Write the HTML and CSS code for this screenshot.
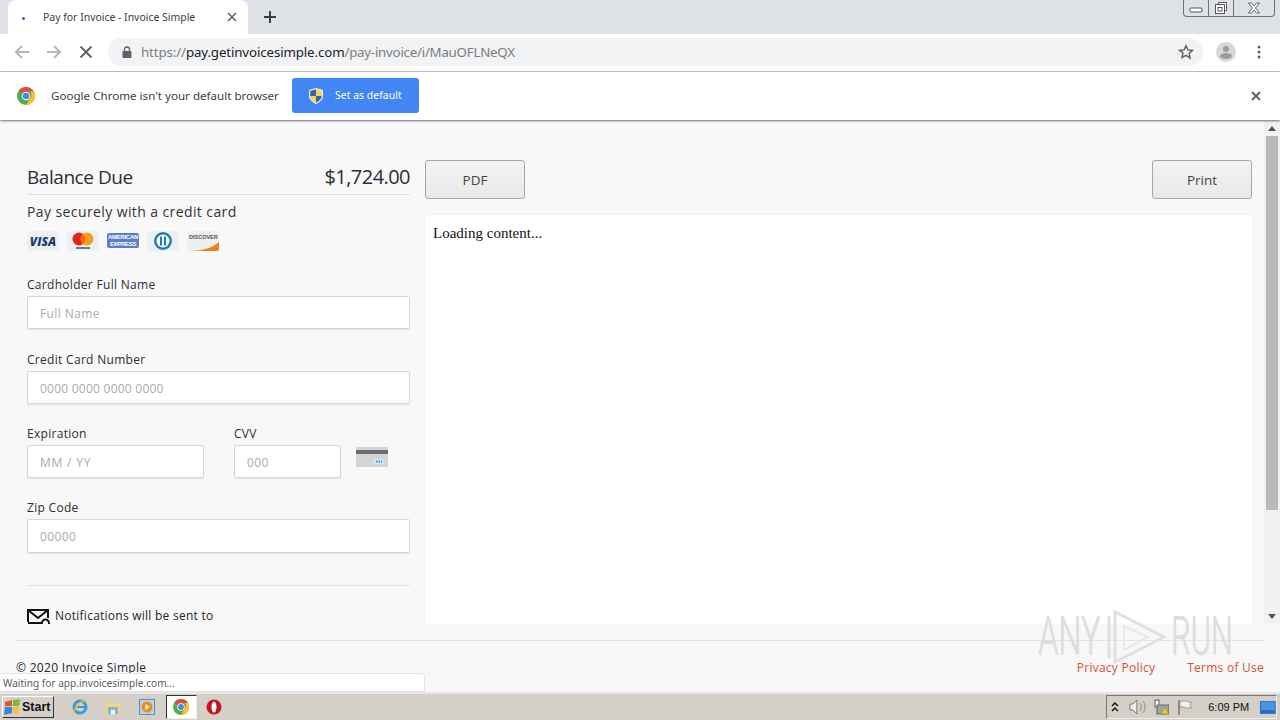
FILE: index.html
```html
<!DOCTYPE html>
<html lang="en">
<head>
<meta charset="utf-8">
<title>Pay for Invoice - Invoice Simple</title>
<link rel="stylesheet" href="styles.css">
</head>
<body>
<div class="browser">
  <header class="tabstrip">
    <div class="tab">
      <span class="tab-dot"></span>
      <span class="tab-title">Pay for Invoice - Invoice Simple</span>
      <svg class="tab-close" width="10" height="10" viewBox="0 0 10 10"><path d="M1 1l8 8M9 1l-8 8" stroke="#5f6368" stroke-width="1.6"/></svg>
    </div>
    <svg class="newtab" width="12" height="12" viewBox="0 0 12 12"><path d="M6 0v12M0 6h12" stroke="#3c4043" stroke-width="2"/></svg>
    <div class="caption">
      <span class="cap-btn cap-min"><svg width="14" height="6" viewBox="0 0 14 6"><rect x="1" y="1" width="12" height="4" rx="1" fill="#fff" stroke="#555"/></svg></span>
      <span class="cap-btn cap-max"><svg width="14" height="14" viewBox="0 0 14 14"><path d="M4.5 3.500V1.500h8v8h-2" fill="#fff" stroke="#555"/><rect x="1.500" y="3.500" width="9" height="9" fill="#fff" stroke="#555"/><rect x="4" y="6.500" width="4" height="3.500" fill="none" stroke="#555"/></svg></span>
      <span class="cap-btn cap-close"><svg width="14" height="12" viewBox="0 0 14 12"><path d="M1.500 1h3l2.500 3 2.500-3h3l-4 5 4 5h-3L7 8l-2.500 3h-3l4-5z" fill="#fff" stroke="#555" stroke-width=".9"/></svg></span>
    </div>
  </header>

  <nav class="toolbar">
    <svg class="nav-icon" width="16" height="16" viewBox="0 0 16 16"><path d="M15 8H2M8 2L2 8l6 6" fill="none" stroke="#b4b7ba" stroke-width="2"/></svg>
    <svg class="nav-icon" width="16" height="16" viewBox="0 0 16 16"><path d="M1 8h13M8 2l6 6-6 6" fill="none" stroke="#b4b7ba" stroke-width="2"/></svg>
    <svg class="nav-icon" width="14" height="14" viewBox="0 0 14 14"><path d="M1.500 1.500l11 11M12.500 1.500l-11 11" stroke="#5f6368" stroke-width="2"/></svg>
    <div class="omnibox">
      <svg class="lock" width="10" height="12" viewBox="0 0 10 12"><path d="M2.500 5V3.500a2.500 2.500 0 0 1 5 0V5" fill="none" stroke="#5f6368" stroke-width="1.300"/><rect x="0.500" y="5" width="9" height="7" rx="1" fill="#5f6368"/></svg>
      <span class="url"><span class="url-dim">https://</span><span class="url-host">pay.getinvoicesimple.com</span><span class="url-dim url-path">/pay-invoice/i/MauOFLNeQX</span></span>
      <svg class="star" width="16" height="16" viewBox="0 0 16 16"><path d="M8 1.800l1.900 4.100 4.500.5-3.300 3.100.9 4.500L8 11.300l-4 2.200.9-4.500L1.600 6.400l4.500-.5z" fill="none" stroke="#5f6368" stroke-width="1.500"/></svg>
    </div>
    <svg class="avatar" width="20" height="20" viewBox="0 0 20 20"><circle cx="10" cy="10" r="10" fill="#d7d8da"/><circle cx="10" cy="7" r="3" fill="#9a9ca0"/><ellipse cx="10" cy="14" rx="6" ry="3" fill="#9a9ca0"/></svg>
    <svg class="menu" width="4" height="14" viewBox="0 0 4 14"><circle cx="2" cy="2" r="1.500" fill="#5f6368"/><circle cx="2" cy="7" r="1.500" fill="#5f6368"/><circle cx="2" cy="12" r="1.500" fill="#5f6368"/></svg>
  </nav>

  <section class="infobar">
    <svg class="chrome-logo" width="18" height="18" viewBox="0 0 18 18"><circle cx="9" cy="9" r="9" fill="#4caf50"/><path d="M9 0a9 9 0 0 1 7.800 4.500H9A4.500 4.500 0 0 0 4.900 7.200L1.700 3.700A9 9 0 0 1 9 0z" fill="#e04a3f"/><path d="M16.800 4.500A9 9 0 0 1 9 18l3.900-6.700a4.500 4.500 0 0 0 0-6.800z" fill="#fbc02d"/><circle cx="9" cy="9" r="4.200" fill="#fff"/><circle cx="9" cy="9" r="3.300" fill="#4a86e8"/></svg>
    <span class="info-text">Google Chrome isn't your default browser</span>
    <button class="default-btn">
      <svg width="14" height="16" viewBox="0 0 14 16"><path d="M7 .5l6.500 1.800V8c0 3.700-2.800 6-6.500 7.500C3.300 14 .5 11.700.5 8V2.300z" fill="#f3d35a" stroke="#e8eefc"/><path d="M7 1.500V8H1.300V3zM7 8h5.700c-.2 3-2.600 5-5.700 6.400z" fill="#2f62b8"/></svg>
      <span class="default-label">Set as default</span>
    </button>
    <svg class="info-close" width="10" height="10" viewBox="0 0 10 10"><path d="M1 1l8 8M9 1l-8 8" stroke="#5f6368" stroke-width="2"/></svg>
  </section>

  <main class="page">
    <div class="frame">
      <aside class="pay">
        <div class="balance"><span class="bal-title">Balance Due</span><span class="amount">$1,724.00</span></div>
        <p class="secure">Pay securely with a credit card</p>
        <div class="cards">
          <span class="card visa">VISA</span>
          <span class="card"><svg width="24" height="20" viewBox="0 0 24 20"><circle cx="8" cy="8" r="6.500" fill="#e0231c"/><circle cx="16" cy="8" r="6.500" fill="#f49f1e"/><path d="M12 3.100a6.500 6.500 0 0 1 0 9.800 6.500 6.500 0 0 1 0-9.800z" fill="#f0641c"/><rect x="5" y="16" width="14" height="2" fill="#777"/></svg></span>
          <span class="card amex">AMERICAN<br>EXPRESS</span>
          <span class="card"><svg width="20" height="20" viewBox="0 0 20 20"><circle cx="10" cy="10" r="9" fill="#1b7fb8"/><circle cx="10" cy="10" r="6.500" fill="#fff"/><rect x="7" y="5.500" width="2" height="9" fill="#1b7fb8"/><rect x="11" y="5.500" width="2" height="9" fill="#1b7fb8"/></svg></span>
          <span class="card disc"><span class="disc-text">DISCOVER</span><svg class="disc-swoosh" width="32" height="10" viewBox="0 0 32 10"><path d="M2 10c12 0 24-3 30-9v9z" fill="#ef7f1a"/></svg></span>
        </div>

        <div class="field">
          <label class="label">Cardholder Full Name</label>
          <div class="input">Full Name</div>
        </div>
        <div class="field">
          <label class="label">Credit Card Number</label>
          <div class="input input-num">0000 0000 0000 0000</div>
        </div>
        <div class="field-row">
          <div class="field exp">
            <label class="label">Expiration</label>
            <div class="input input-exp">MM / YY</div>
          </div>
          <div class="field cvv">
            <label class="label">CVV</label>
            <div class="input">000</div>
          </div>
          <svg class="cvv-icon" width="32" height="20" viewBox="0 0 32 20"><rect width="32" height="20" fill="#d3d4d5"/><rect y="3" width="32" height="4" fill="#6b6d70"/><rect x="17" y="12" width="11" height="5" fill="#cfe9f7"/><path d="M20 14.500h6" stroke="#2d9bd8" stroke-width="2" stroke-dasharray="1.500 1"/></svg>
        </div>
        <div class="field zip">
          <label class="label">Zip Code</label>
          <div class="input">00000</div>
        </div>
        <hr class="rule">
        <div class="notify">
          <svg width="24" height="18" viewBox="0 0 24 18"><path d="M1 14V2h20v8M1 2l10 8 10-8M1 15h13" fill="none" stroke="#111" stroke-width="2"/><path d="M15 18v-3a3.500 3.500 0 0 1 7 0v3z" fill="none" stroke="#111" stroke-width="2"/></svg>
          <span>Notifications will be sent to</span>
        </div>
      </aside>

      <section class="viewer">
        <div class="viewer-actions">
          <button class="gray-btn">PDF</button>
          <button class="gray-btn">Print</button>
        </div>
        <div class="sheet">Loading content...</div>
      </section>

      <div class="scrollbar">
        <span class="arrow-up"></span>
        <span class="thumb"></span>
        <span class="arrow-down"></span>
      </div>
    </div>

    <footer class="footer">
      <span class="copy">© 2020 Invoice Simple</span>
      <span class="links"><a>Privacy Policy</a><a>Terms of Use</a></span>
    </footer>

    <div class="status">Waiting for app.invoicesimple.com...</div>
    <div class="watermark">
      <span class="wm-text">ANY</span>
      <svg width="62" height="56" viewBox="0 0 62 56"><path d="M3 8v42M9 4v50L58 29z" fill="none" stroke="#dfe0e1" stroke-width="3"/><path d="M18 18v24l24-13z" fill="none" stroke="#e8e9ea" stroke-width="2"/></svg>
      <span class="wm-text">RUN</span>
    </div>
  </main>

  <footer class="taskbar">
    <button class="start">
      <svg width="18" height="16" viewBox="0 0 18 16"><path d="M1 3l7-2v6H1z" fill="#e2562b"/><path d="M9 1l7-1-1 7H9z" fill="#7dba3c"/><path d="M1 8h7v6l-8 2z" fill="#3a86d8"/><path d="M9 8h6l-1 7-5-1z" fill="#f3c033"/></svg>
      <span>Start</span>
    </button>
    <span class="task-item"><svg width="18" height="18" viewBox="0 0 18 18"><circle cx="9" cy="9" r="6" fill="none" stroke="#3a9ad9" stroke-width="3"/><path d="M4 9h11" stroke="#3a9ad9" stroke-width="2"/><path d="M2 15c3-8 9-13 14-13" fill="none" stroke="#f3c033" stroke-width="1.500"/></svg></span>
    <span class="task-item"><svg width="18" height="16" viewBox="0 0 18 16"><path d="M2 3h5l2 2h7v10H2z" fill="#f2d675"/><rect x="4" y="8" width="10" height="7" fill="#7fb6d6"/><rect x="7" y="11" width="4" height="4" fill="#fff"/></svg></span>
    <span class="task-item"><svg width="16" height="16" viewBox="0 0 16 16"><rect x=".5" y=".5" width="15" height="15" fill="#b8d3ec" stroke="#5a8cc0"/><circle cx="8" cy="8" r="5.500" fill="#f08a1d"/><path d="M6.500 5l4 3-4 3z" fill="#fff"/></svg></span>
    <span class="task-item task-active"><svg width="16" height="16" viewBox="0 0 18 18"><circle cx="9" cy="9" r="9" fill="#4caf50"/><path d="M9 0a9 9 0 0 1 7.800 4.500H9A4.500 4.500 0 0 0 4.900 7.200L1.700 3.700A9 9 0 0 1 9 0z" fill="#e04a3f"/><path d="M16.800 4.500A9 9 0 0 1 9 18l3.900-6.700a4.500 4.500 0 0 0 0-6.800z" fill="#fbc02d"/><circle cx="9" cy="9" r="4.200" fill="#fff"/><circle cx="9" cy="9" r="3.300" fill="#4a86e8"/></svg></span>
    <span class="task-item"><svg width="16" height="16" viewBox="0 0 16 16"><circle cx="8" cy="8" r="7.500" fill="#c9141c"/><ellipse cx="8" cy="8" rx="2.500" ry="5.500" fill="#fff"/></svg></span>
    <div class="tray">
      <svg class="tray-chevron" width="8" height="10" viewBox="0 0 8 10"><path d="M1 4l3-3 3 3M1 9l3-3 3 3" fill="none" stroke="#111" stroke-width="1.500"/></svg>
      <svg width="17" height="16" viewBox="0 0 17 16"><path d="M1 5h3l4-4v14l-4-4H1z" fill="#eee" stroke="#777"/><path d="M11 4c2 2 2 6 0 8M14 2c3 3 3 9 0 12" fill="none" stroke="#888"/></svg>
      <svg width="16" height="16" viewBox="0 0 16 16"><rect x="1" y="1" width="4" height="7" fill="#fff" stroke="#555"/><rect x="3" y="6" width="12" height="9" fill="#9aa6b2" stroke="#666"/><path d="M11 8l4 7H7z" fill="#f3c833" stroke="#9a7a10" stroke-width=".6"/></svg>
      <svg width="16" height="16" viewBox="0 0 16 16"><path d="M2 1v15" stroke="#777" stroke-width="1.500"/><path d="M3 2h7l1 1h4l-2 3 2 3H9L8 8H3z" fill="#f2f2f2" stroke="#888" stroke-width=".8"/></svg>
      <span class="clock">6:09 PM</span>
      <svg class="desktop" width="16" height="13" viewBox="0 0 16 13"><rect width="16" height="13" fill="#2b6fc4"/><rect x="1" y="1" width="14" height="8" fill="#4c95e2"/></svg>
    </div>
  </footer>
</div>
</body>
</html>
```
FILE: styles.css
```css
* { box-sizing: border-box; }
html, body { margin: 0; height: 100%; overflow: hidden; }
body { font-family: "Open Sans", "Liberation Sans", sans-serif; color: #222; background: #f8f8f9; }
button { font: inherit; cursor: default; }
p { margin: 0; }

.browser { width: 1280px; height: 720px; display: flex; flex-direction: column; }

/* tab strip */
.tabstrip { height: 34px; background: #dee1e6; display: flex; align-items: center; position: relative; flex: none; }
.tab { width: 240px; height: 34px; margin-left: 8px; padding: 0 8px 1px 12px; background: #fff; border-radius: 8px 8px 0 0; display: flex; align-items: center; }
.tab-dot { width: 3px; height: 3px; border-radius: 50%; background: #3b5aa8; margin-left: 2px; margin-top: 3px; flex: none; }
.tab-title { font-size: 10.450px; color: #3c4043; margin-left: 18px; white-space: nowrap; flex: 1; font-family: "Noto Sans", sans-serif; }
.tab-close { flex: none; margin-right: 3px; }
.newtab { margin-left: 16px; }
.caption { position: absolute; top: 0; right: 5px; width: 92px; height: 17px; display: flex; background: #dee1e6; border: 1px solid #6f7378; border-top: 0; border-radius: 0 0 4px 4px; }
.cap-btn { display: flex; align-items: center; justify-content: center; height: 16px; }
.cap-min { width: 25px; border-right: 1px solid #6f7378; padding-top: 4px; }
.cap-max { width: 25px; border-right: 1px solid #6f7378; }
.cap-close { flex: 1; }

/* toolbar */
.toolbar { height: 38px; background: #fff; display: flex; align-items: center; flex: none; padding: 0 0 2px 14px; border-bottom: 1px solid #c0c2c4; }
.nav-icon { flex: none; margin-right: 16px; }
.nav-icon:nth-child(3) { margin: 0 15px 0 1px; }
.omnibox { width: 1095px; height: 28px; background: #f1f3f4; border-radius: 14px; display: flex; align-items: center; padding: 0 9px 0 14px; }
.lock { flex: none; }
.url { flex: 1; margin-left: 9px; font-size: 13.300px; white-space: nowrap; font-family: "Noto Sans", sans-serif; letter-spacing: -0.12px; }
.url-dim { color: #7b7e82; }
.url-path { letter-spacing: -0.24px; }
.url-host { color: #202124; }
.star { flex: none; }
.avatar { flex: none; margin-left: 13px; }
.menu { flex: none; margin-left: 21px; }

/* infobar */
.infobar { height: 48px; background: #fff; display: flex; align-items: center; flex: none; padding: 0 0 1px 17px; box-shadow: 0 1px 2px rgba(0,0,0,.55); position: relative; z-index: 2; }
.info-text { font-size: 11.600px; color: #3c4043; margin-left: 16px; white-space: nowrap; font-family: "Noto Sans", sans-serif; width: 241px; }
.default-btn { width: 127px; height: 35px; background: #4285f4; border: 0; border-radius: 3px; display: flex; align-items: center; padding: 0 0 0 17px; color: #fff; font-size: 10.500px; gap: 12px; font-family: "Noto Sans", sans-serif; }
.default-label { margin-bottom: 2px; }
.info-close { margin-left: auto; margin-right: 19px; }

/* page */
.page { flex: 1; position: relative; background: #f8f8f9; min-height: 0; display: flex; flex-direction: column; }
.frame { height: 504px; display: flex; overflow: hidden; flex: none; }

.pay { width: 425px; padding: 40px 15px 0 27px; flex: none; }
.balance { display: flex; justify-content: space-between; align-items: center; height: 35px; padding-bottom: 1px; border-bottom: 1px solid #dfe0e2; color: #2a2f36; }
.bal-title { font-size: 19px; letter-spacing: -.45px; }
.amount { font-size: 20px; letter-spacing: -.55px; }
.secure { font-size: 14px; letter-spacing: .4px; line-height: 20px; margin-top: 7px; color: #2f3338; }
.cards { display: flex; gap: 8px; margin-top: 9px; height: 20px; }
.card { width: 32px; height: 20px; background: #eeeff0; display: flex; align-items: center; justify-content: center; position: relative; border-radius: 2px; }
.visa { font-size: 12px; font-weight: 800; font-style: italic; color: #1c3a74; font-family: "Open Sans", sans-serif; }
.amex { font-size: 6px; line-height: 7px; font-weight: 700; color: #fff; background: #5b7fc4; text-align: center; letter-spacing: -.3px; height: 15px; font-family: "Liberation Sans", sans-serif; display: block; padding-top: 1px; margin-top: 2px; }
.disc { flex-direction: column; overflow: hidden; }
.disc-text { font-size: 5.500px; font-weight: 700; color: #555; position: absolute; top: 3px; left: 2px; font-family: "Liberation Sans", sans-serif; }
.disc-swoosh { position: absolute; bottom: 0; left: 0; }

.field { margin-bottom: 20px; }
.cards + .field { margin-top: 24px; margin-bottom: 21px; }
.label { display: block; font-size: 12px; line-height: 20px; letter-spacing: .3px; margin-bottom: 1px; color: #2a2e33; }
.input { height: 33px; background: #fff; border: 1px solid #d5d6d8; border-radius: 2px; box-shadow: 0 1px 1px rgba(0,0,0,.08); font-size: 12px; letter-spacing: .4px; color: #a9abae; display: flex; align-items: center; padding: 1px 0 0 12px; }
.input-num { letter-spacing: .24px; }
.input-exp { letter-spacing: .8px; }
.field-row { display: flex; }
.exp { width: 177px; }
.cvv { width: 107px; margin-left: 30px; }
.cvv-icon { margin: 23px 0 0 15px; flex: none; }
.zip { margin-bottom: 0; }
.zip .input { height: 34px; }
.rule { border: 0; border-top: 1px solid #e2e3e5; margin: 32px 0 0; }
.notify { display: flex; align-items: center; gap: 4px; margin-top: 20px; font-size: 12px; letter-spacing: .25px; color: #23262b; height: 18px; white-space: nowrap; }
.notify svg { flex: none; margin-top: 3px; }

.viewer { flex: 1; display: flex; flex-direction: column; padding-top: 40px; padding-right: 12px; min-width: 0; }
.viewer-actions { display: flex; justify-content: space-between; height: 39px; flex: none; }
.gray-btn { width: 100px; height: 39px; background: linear-gradient(#f3f3f3, #e9e9e9); border: 1px solid #a5a6a8; border-radius: 3px; font-size: 13.500px; color: #444; font-family: "Open Sans", sans-serif; }
.sheet { flex: 1; margin-top: 16px; background: #fff; padding: 9px 8px; font-family: "Liberation Serif", serif; font-size: 15px; color: #111; line-height: 18px; box-shadow: 0 0 2px rgba(0,0,0,.06); }

.scrollbar { width: 16px; flex: none; background: #f1f1f1; display: flex; flex-direction: column; align-items: center; }
.arrow-up { width: 0; height: 0; border: 4px solid transparent; border-top: 0; border-bottom: 5px solid #555; margin: 6px 0 5px; }
.thumb { width: 12px; height: 374px; background: #b9b9b9; flex: none; }
.arrow-down { width: 0; height: 0; border: 4px solid transparent; border-bottom: 0; border-top: 5px solid #555; margin-top: auto; margin-bottom: 5px; }

.footer { flex: 1; margin: 16px 16px 0; border-top: 1px solid #e2e3e5; display: flex; justify-content: space-between; padding-top: 18px; font-size: 12px; letter-spacing: .3px; color: #23262b; position: relative; }
.links { display: flex; gap: 32px; color: #d4532c; letter-spacing: .25px; }

.status { position: absolute; left: 0; bottom: 0; width: 425px; height: 19px; background: #fff; border: 1px solid #e4e4e4; border-left: 0; border-radius: 0 3px 0 0; font-size: 10.100px; color: #5a5d60; padding: 0 0 0 3px; line-height: 18px; font-family: "Noto Sans", sans-serif; z-index: 3; }

.watermark { position: absolute; left: 1038px; top: 488px; display: flex; align-items: center; gap: 3px; height: 56px; pointer-events: none; z-index: 4; }
.wm-text { font-family: "Roboto", sans-serif; font-weight: 300; font-size: 54px; line-height: 56px; color: #dcddde; display: inline-block; width: 62px; white-space: nowrap; transform: scaleX(.57); transform-origin: left center; text-shadow: 1px 1px 1px rgba(200,200,200,.5); }
.wm-text:first-child { margin-right: 3px; transform: scaleX(.6); }

/* taskbar */
.taskbar { height: 28px; flex: none; background: #d4d0c8; border-top: 2px solid #e9e7e2; display: flex; align-items: center; position: relative; }
.start { width: 52px; height: 22px; margin-left: 2px; background: #d4d0c8; border: 1px solid; border-color: #fff #333 #333 #fff; padding: 0 0 0 1px; display: flex; align-items: center; gap: 0; font: 700 12.500px "Liberation Sans", sans-serif; color: #111; }
.task-item { width: 33.500px; height: 24px; display: flex; align-items: center; justify-content: center; flex: none; }
.start + .task-item { margin-left: 9px; }
.task-active { width: 31px; background: #fff; border: 1px solid; border-color: #333 #eee #eee #333; margin: 0 1px 0 2px; }
.tray { margin-left: auto; margin-right: 3px; width: 171px; height: 24px; border: 1px solid; border-color: #777 #eee #eee #777; display: flex; align-items: center; padding-left: 4px; gap: 8px; }
.tray-chevron { margin-right: 2px; }
.clock { font: 11px "Liberation Sans", sans-serif; color: #111; margin-left: 7px; white-space: nowrap; }
.desktop { margin-left: 3px; }
```
